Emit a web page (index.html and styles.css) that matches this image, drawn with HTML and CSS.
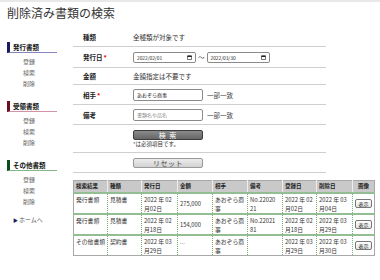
FILE: index.html
```html
<!DOCTYPE html>
<html lang="ja">
<head>
<meta charset="utf-8">
<title>削除済み書類の検索</title>
<link rel="stylesheet" href="styles.css">
</head>
<body>
<div class="topbar"></div>
<h1 class="title">削除済み書類の検索</h1>
<div class="layout">
  <nav class="side">
    <div class="side-h side-h--issue">発行書類</div>
    <ul class="side-links"><li>登録</li><li>検索</li><li>削除</li></ul>
    <div class="side-h side-h--recv">受領書類</div>
    <ul class="side-links"><li>登録</li><li>検索</li><li>削除</li></ul>
    <div class="side-h side-h--other">その他書類</div>
    <ul class="side-links side-links--last"><li>登録</li><li>検索</li><li>削除</li></ul>
    <div class="home"><span class="home-arrow">▶</span>ホームへ</div>
  </nav>
  <main class="main">
    <div class="form">
      <div class="row row--first">
        <div class="label">種類</div>
        <div class="value">全種類が対象です</div>
      </div>
      <div class="row row--input">
        <div class="label">発行日<span class="req">*</span></div>
        <div class="value">
          <span class="date"><span class="date-text">2022/02/01</span><svg class="cal" viewBox="0 0 8 8" width="5" height="5"><rect x="0.6" y="1.2" width="6.8" height="6.2" rx="0.8" fill="none" stroke="#222" stroke-width="1.1"/><rect x="0.6" y="1.2" width="6.8" height="2" fill="#222"/></svg></span>
          <span class="tilde">〜</span>
          <span class="date"><span class="date-text">2022/03/30</span><svg class="cal" viewBox="0 0 8 8" width="5" height="5"><rect x="0.6" y="1.2" width="6.8" height="6.2" rx="0.8" fill="none" stroke="#222" stroke-width="1.1"/><rect x="0.6" y="1.2" width="6.8" height="2" fill="#222"/></svg></span>
        </div>
      </div>
      <div class="row row--short">
        <div class="label">金額</div>
        <div class="value">金額指定は不要です</div>
      </div>
      <div class="row row--field">
        <div class="label">相手<span class="req">*</span></div>
        <div class="value"><input class="text-in" type="text" value="あおぞら商事"><span class="match">一部一致</span></div>
      </div>
      <div class="row row--field">
        <div class="label">備考</div>
        <div class="value"><input class="text-in" type="text" placeholder="書類名や品名"><span class="match">一部一致</span></div>
      </div>
      <div class="row row--search">
        <div class="label"></div>
        <div class="value value--stack">
          <button class="btn btn--search" type="button">検 索</button>
          <span class="note">*は必須項目です。</span>
        </div>
      </div>
      <div class="row row--reset">
        <div class="label"></div>
        <div class="value"><button class="btn btn--reset" type="button">リセット</button></div>
      </div>
    </div>
    <table class="results">
      <colgroup>
        <col class="c34"><col class="c34"><col class="c36"><col class="c35"><col class="c35"><col class="c35"><col class="c34"><col class="c36"><col class="c22">
      </colgroup>
      <thead>
        <tr><th>検索結果</th><th>種類</th><th>発行日</th><th>金額</th><th>相手</th><th>備考</th><th>登録日</th><th>削除日</th><th class="th-img">画像</th></tr>
      </thead>
      <tbody>
        <tr><td>発行書類</td><td>見積書</td><td>2022 年 02<br>月02日</td><td class="num">275,000</td><td>あおぞら商<br>事</td><td>No.22020<br>21</td><td>2022 年 02<br>月02日</td><td>2022 年 03<br>月04日</td><td class="img"><button class="show" type="button">表示</button></td></tr>
        <tr><td>発行書類</td><td>見積書</td><td>2022 年 02<br>月18日</td><td class="num">154,000</td><td>あおぞら商<br>事</td><td>No.22021<br>81</td><td>2022 年 02<br>月18日</td><td>2022 年 03<br>月29日</td><td class="img"><button class="show" type="button">表示</button></td></tr>
        <tr><td>その他書類</td><td>契約書</td><td>2022 年 03<br>月29日</td><td class="dots">...</td><td>あおぞら商<br>事</td><td></td><td>2022 年 03<br>月29日</td><td>2022 年 03<br>月30日</td><td class="img"><button class="show" type="button">表示</button></td></tr>
      </tbody>
    </table>
  </main>
</div>
</body>
</html>
```

FILE: styles.css
```css
body {
  margin: 0;
  font-family: "Noto Sans CJK JP", "Noto Sans", sans-serif;
  color: #333;
  background: #fff;
}
.topbar {
  height: 2px;
  background: #e8e8e8;
}
.title {
  margin: 0;
  padding: 3px 0 7px 7px;
  font-size: 12px;
  line-height: 16px;
  font-weight: normal;
  color: #333;
}
.layout {
  display: flex;
  align-items: flex-start;
}
.side {
  width: 50px;
  margin-left: 7px;
  padding-top: 14px;
}
.side-h {
  font-size: 6.5px;
  font-weight: bold;
  line-height: 10px;
  padding-left: 3px;
  border-left: 3px solid #1b1b5e;
  border-bottom: 1px solid #8585c0;
  color: #111;
}
.side-h--recv {
  border-left-color: #6a1020;
  border-bottom-color: #d393a6;
}
.side-h--other {
  border-left-color: #0e4c1c;
  border-bottom-color: #86b886;
}
.side-links {
  list-style: none;
  margin: 3px 0 12px;
  padding: 0 0 0 16px;
}
.side-links--last {
  margin-bottom: 7px;
}
.side-links li {
  font-size: 6px;
  line-height: 11px;
  color: #666;
}
.home {
  font-size: 6px;
  line-height: 11px;
  color: #555;
  padding-left: 6px;
}
.home-arrow {
  color: #1b1b5e;
  font-size: 5px;
  margin-right: 1px;
}
.main {
  margin-left: 16px;
  width: 301px;
}
.form {
  width: 253px;
}
.row {
  display: flex;
  align-items: center;
  border-bottom: 1px solid #cfcfcf;
}
.row--first { height: 18px; }
.row--input { height: 20px; }
.row--short { height: 16px; }
.row--field { height: 19px; }
.row--search { height: 27px; }
.row--reset { height: 19px; }
.label {
  width: 50px;
  padding-left: 10px;
  font-size: 6.5px;
  font-weight: bold;
  color: #222;
  flex: none;
}
.req {
  color: #e00;
  margin-left: 1px;
}
.value {
  display: flex;
  align-items: center;
  font-size: 6.5px;
  color: #333;
}
.value--stack {
  flex-direction: column;
  align-items: flex-start;
  gap: 1px;
}
.date {
  box-sizing: border-box;
  width: 63px;
  height: 11px;
  border: 1px solid #8a8a8a;
  border-radius: 2px;
  display: flex;
  align-items: center;
  justify-content: space-between;
  padding: 0 3px 0 3px;
  background: #fff;
}
.date-text {
  font-size: 4.8px;
  color: #222;
}
.cal {
  display: block;
}
.tilde {
  margin: 0 2px;
  font-size: 6.5px;
  color: #444;
}
.text-in {
  box-sizing: border-box;
  width: 70px;
  height: 12px;
  margin: 0;
  padding: 0 3px;
  border: 1px solid #8a8a8a;
  border-radius: 2px;
  font-family: "Noto Sans CJK JP", sans-serif;
  font-size: 5px;
  color: #222;
  background: #fff;
}
.text-in::placeholder {
  color: #888;
}
.match {
  margin-left: 4px;
  color: #444;
}
.btn {
  box-sizing: border-box;
  width: 70px;
  height: 10px;
  margin: 0;
  padding: 0;
  border-radius: 2px;
  font-family: "Noto Sans CJK JP", sans-serif;
  font-size: 7px;
  line-height: 8px;
}
.btn--search {
  background: linear-gradient(#8a8a8a, #666);
  border: 1px solid #3c3c3c;
  color: #fff;
  letter-spacing: 1px;
}
.btn--reset {
  background: linear-gradient(#ececec, #d2d2d2);
  border: 1px solid #999;
  color: #444;
  letter-spacing: 0.5px;
}
.note {
  font-size: 5.5px;
  color: #333;
  line-height: 7px;
}
.results {
  margin-top: 7px;
  width: 301px;
  table-layout: fixed;
  border-collapse: collapse;
  border: 1px solid #a8a8a8;
  font-size: 5.8px;
}
.c34 { width: 34px; }
.c35 { width: 35px; }
.c36 { width: 36px; }
.c22 { width: 22px; }
.results th {
  background: #c9c9c9;
  color: #222;
  font-weight: bold;
  text-align: left;
  font-size: 5.5px;
  line-height: 7px;
  padding: 2px 2px;
  border-left: 1px solid #ededed;
  white-space: nowrap;
  overflow: hidden;
}
.results th:first-child {
  border-left: none;
}
.results .th-img {
  text-align: center;
}
.results td {
  padding: 2px 2px 0;
  line-height: 8.5px;
  vertical-align: top;
  color: #333;
  white-space: nowrap;
  overflow: hidden;
  border-top: 2px solid #93bd93;
  border-left: 1px dotted #7aab7a;
}
.results td:first-child {
  border-left: none;
}
.results td.num {
  vertical-align: middle;
}
.results td.dots {
  color: #555;
}
.results td.img {
  vertical-align: middle;
  text-align: center;
  padding: 0;
}
.show {
  margin: 0;
  padding: 0 2px;
  height: 9px;
  font-family: "Noto Sans CJK JP", sans-serif;
  font-size: 5px;
  line-height: 7px;
  color: #222;
  background: linear-gradient(#fff, #e6e6e6);
  border: 1px solid #777;
  border-radius: 2px;
}
```
